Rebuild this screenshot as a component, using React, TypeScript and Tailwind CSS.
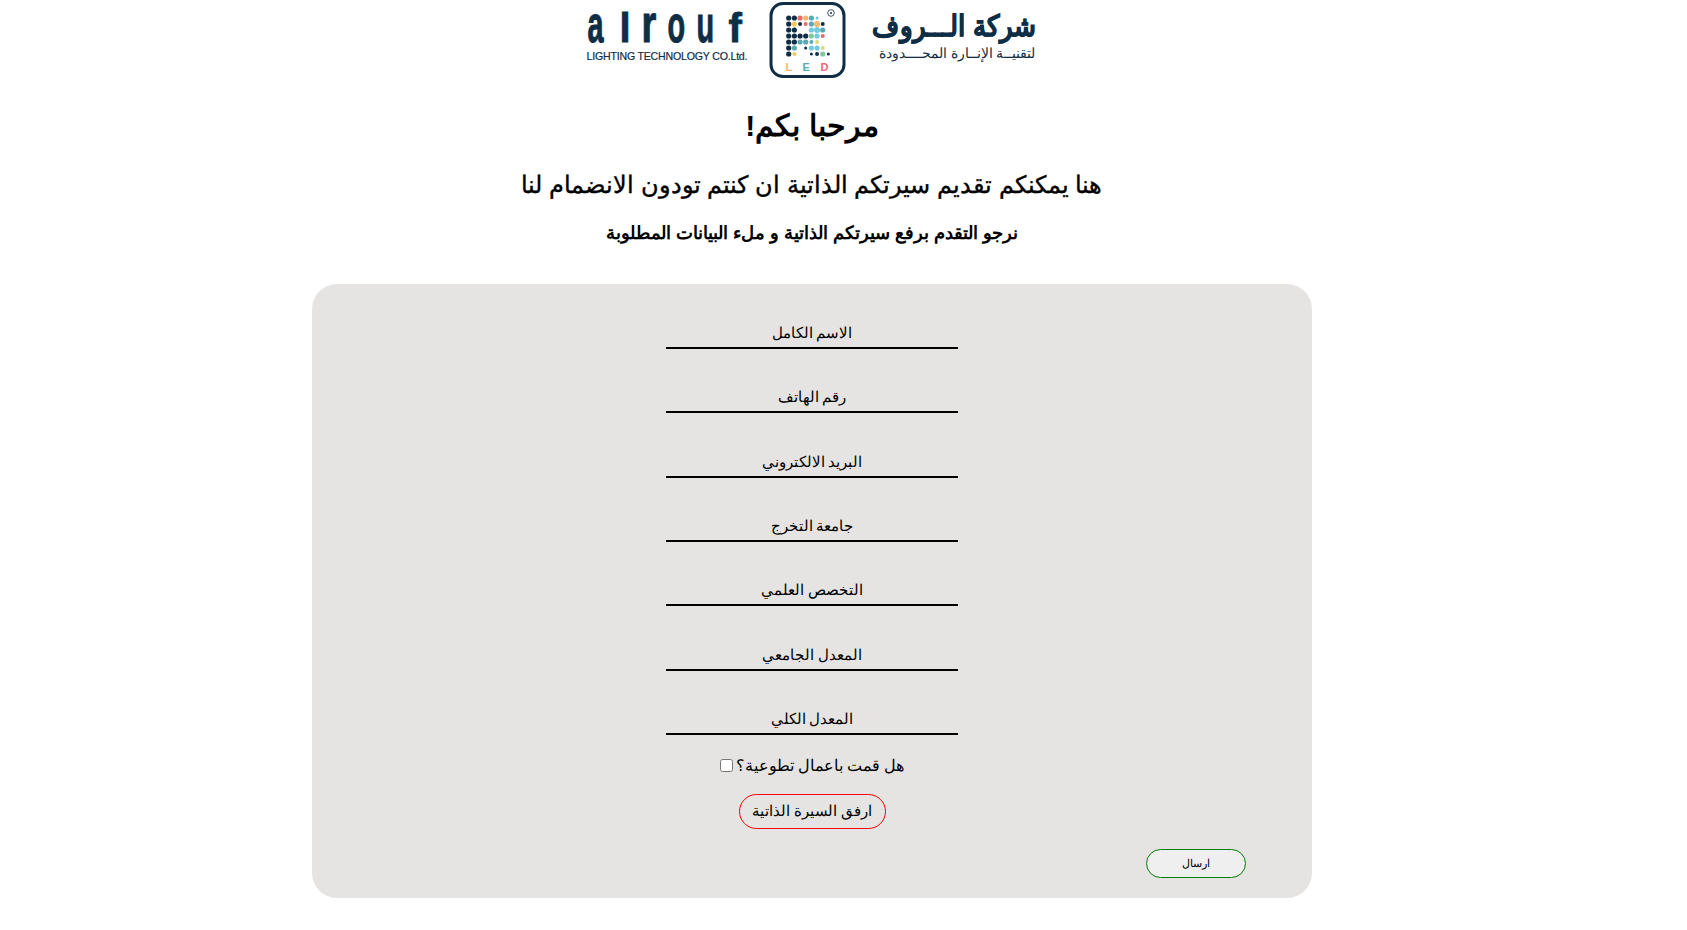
const NAVY = "#0f2d44";
const dots: [number, number, string, number?][] = [
  [0,0,NAVY],[1,0,NAVY],[2,0,"#ec6a6a"],[3,0,"#f5b968"],[4,0,"#5aa9b5"],[5,0,"#6fc6dc",1.5],
  [0,1,NAVY],[1,1,"#f7c75a"],[2,1,NAVY,2],[3,1,"#ec6a6a",2],[4,1,"#5aa9b5"],[5,1,"#f5b968",3],[6,1,NAVY,2],
  [0,2,NAVY],[1,2,NAVY],[4,2,"#6fcbe0"],[5,2,"#6fcbe0",3],[6,2,"#5aa9b5"],
  [0,3,NAVY],[1,3,NAVY],[2,3,NAVY],[3,3,NAVY],[4,3,"#7fc8a0"],[5,3,"#6fcbe0"],[6,3,"#ec6a6a",2],
  [0,4,NAVY],[1,4,NAVY],[2,4,"#5aa9b5"],[3,4,"#5aa9b5"],[4,4,"#5aa9b5",2],[5,4,"#d9dc72",2],
  [0,5,NAVY],[1,5,"#5aa9b5"],[3,5,NAVY,1.5],[4,5,"#6fcbe0"],[5,5,"#6fcbe0"],[6,5,"#d9dc72",2],
  [0,6,NAVY],[1,6,"#f7c75a",2],[4,6,NAVY,1.5],[5,6,NAVY,2],[6,6,"#7fc8a0"],[7,6,NAVY,1.5],
];
const latin = "'Liberation Sans', sans-serif";
const letters: [string, number, number, number][] = [
  ["a", 588, 0.72, 1.3],
  ["l", 620, 1.0, 1.0],
  ["r", 642, 0.95, 1.3],
  ["o", 668, 0.72, 1.3],
  ["u", 697, 0.72, 1.3],
  ["f", 729, 1.0, 1.0],
];

function Logo() {
  return (
    <svg width="470" height="84" viewBox="577.5 0 470 84" className="block overflow-visible">
      {letters.map(([c, x, sx, sy]) => (
        <text key={x} transform={`translate(${x} 42) scale(${sx} ${sy})`} fontFamily={latin} fontWeight="700" fontSize="40" fill={NAVY} stroke={NAVY} strokeWidth="0.8">{c}</text>
      ))}
      <text x="587" y="60" fontFamily={latin} fontSize="10.6" letterSpacing="-0.2" fill={NAVY} stroke={NAVY} strokeWidth="0.2">LIGHTING TECHNOLOGY CO.Ltd.</text>
      <rect x="771.5" y="3.5" width="73" height="73" rx="12" fill="#fff" stroke={NAVY} strokeWidth="3" />
      {dots.map(([c, r, fill, rad], i) => (
        <circle key={i} cx={789.2 + c * 5.67} cy={18 + r * 6} r={rad ?? 2.6} fill={fill} />
      ))}
      <circle cx="831.5" cy="13" r="3.3" fill="none" stroke={NAVY} strokeWidth="0.8" />
      <circle cx="831.5" cy="13" r="1" fill={NAVY} />
      <text x="786" y="71" fontFamily={latin} fontSize="11" fontWeight="700" fill="#f5b968">L</text>
      <text x="803" y="71" fontFamily={latin} fontSize="11" fontWeight="700" fill="#5aa9b5">E</text>
      <text x="821" y="71" fontFamily={latin} fontSize="11" fontWeight="700" fill="#ec6a6a">D</text>
      <text transform="translate(1036 36) scale(0.9 1)" direction="rtl" fontFamily={latin} fontWeight="700" fontSize="29" fill={NAVY} stroke={NAVY} strokeWidth="0.7">شركة الـــروف</text>
      <text x="1036" y="58" direction="rtl" fontFamily={latin} fontSize="14" fill={NAVY}>لتقنيــة الإنــارة المحــــدودة</text>
    </svg>
  );
}

const fields = ["الاسم الكامل", "رقم الهاتف", "البريد الالكتروني", "جامعة التخرج", "التخصص العلمي", "المعدل الجامعي", "المعدل الكلي"];

export default function App() {
  return (
    <div dir="rtl" className="w-[1624px] bg-white text-black text-center font-['Liberation_Sans',sans-serif]">
      <div className="flex justify-center" dir="ltr"><Logo /></div>
      <h1 className="mt-[18px] text-[30px] leading-[48px] font-bold">مرحبا بكم!</h1>
      <h2 className="mt-[17px] text-2xl leading-[36px] font-normal [-webkit-text-stroke:0.35px_black]">هنا يمكنكم تقديم سيرتكم الذاتية ان كنتم تودون الانضمام لنا</h2>
      <h3 className="mt-[16px] text-[18.4px] leading-[27px] font-bold">نرجو التقدم برفع سيرتكم الذاتية و ملء البيانات المطلوبة</h3>
      <form className="relative mx-auto mt-[38px] flex h-[614px] w-[1000px] flex-col items-center rounded-[25px] bg-[#e5e4e2] pt-[31px] font-['Liberation_Serif',sans-serif]">
        <div className="flex flex-col gap-[30.33px]">
          {fields.map((f) => (
            <input key={f} type="text" placeholder={f} className="h-[34px] w-[292px] border-0 border-b-2 border-black bg-transparent pt-[5px] text-center text-[15px] text-black outline-none placeholder:text-black" />
          ))}
        </div>
        <label className="mt-[19px] flex h-[24px] items-center text-[15.8px]">
          <span>هل قمت باعمال تطوعية؟</span>
          <input type="checkbox" className="mr-[3px] h-[13px] w-[13px]" />
        </label>
        <button type="button" className="mt-[16px] h-[35px] w-[147px] rounded-[20px] border border-[#ff0000] text-[15px]">ارفق السيرة الذاتية</button>
        <button type="button" className="absolute left-[834px] top-[565px] h-[29px] w-[100px] rounded-[20px] border border-[#008000] bg-[#efefef] text-[11px]">ارسال</button>
      </form>
      <div className="h-[32px]" />
    </div>
  );
}
